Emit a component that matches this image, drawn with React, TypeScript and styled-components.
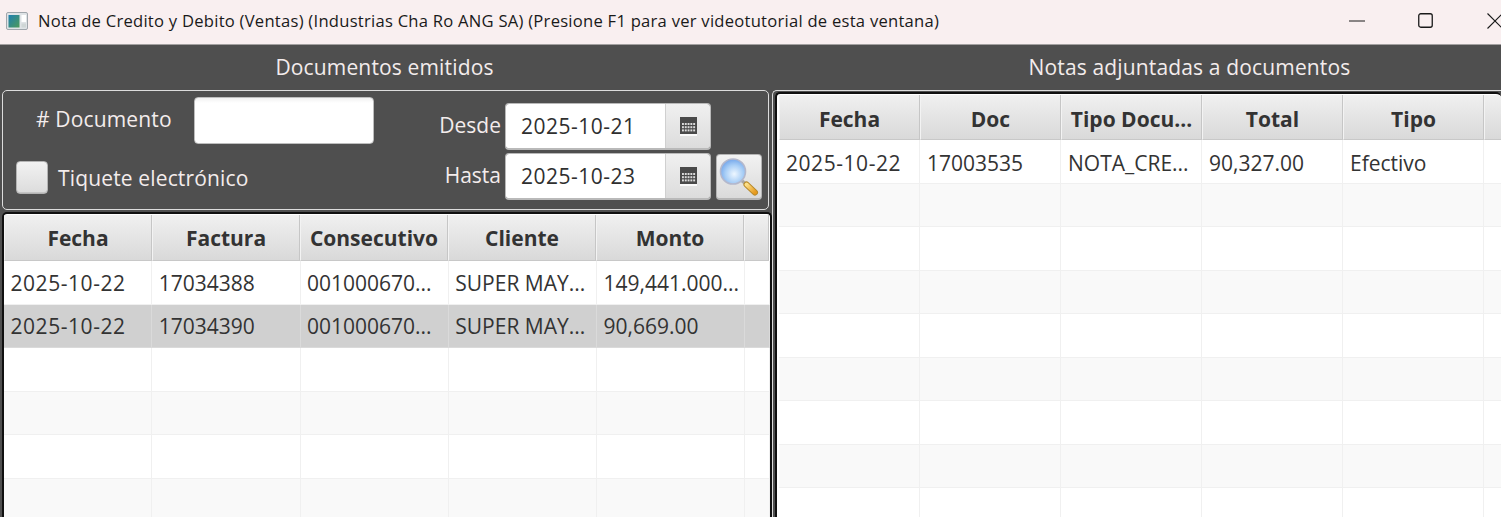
import React from "react";
import styled, { createGlobalStyle } from "styled-components";

const Global = createGlobalStyle`
  html, body { margin: 0; padding: 0; width: 1501px; height: 517px; overflow: hidden; background: #4f4f4f; }
  * { box-sizing: border-box; }
  #root { width: 1501px; height: 517px; }
`;

const FONT = `"Open Sans", "Noto Sans", "Liberation Sans", sans-serif`;

const Win = styled.div`
  width: 1501px; height: 517px; overflow: hidden; display: flex; flex-direction: column;
  background: #4f4f4f; font-family: ${FONT};
`;
const TitleBar = styled.header`
  height: 45px; flex: none; display: flex; align-items: center; padding-left: 6px; padding-bottom: 3px;
  background: #f9eff0; border-bottom: 1px solid #a3a0a0; overflow: hidden;
`;
const AppIcon = styled.svg`width: 23px; height: 20px; flex: none; margin-right: 9px;`;
const TitleText = styled.div`
  flex: 1; min-width: 0; white-space: nowrap; font-size: 16.6px; color: #1a1a1a; letter-spacing: 0.25px;
`;
const Controls = styled.div`display: flex; flex: none; margin-right: -28px;`;
const Control = styled.div`width: 69px; height: 30px; display: flex; align-items: center; justify-content: center;`;

const Columns = styled.main`flex: 1; min-height: 0; display: flex;`;
const LeftCol = styled.section`
  width: 772px; flex: none; display: flex; flex-direction: column; padding-left: 2px;
`;
const RightCol = styled.section`flex: 1; min-width: 0; display: flex; flex-direction: column;`;
const Heading = styled.h2<{ $left?: number; $right?: number }>`
  margin: 0; height: 45px; flex: none; display: flex; align-items: center; justify-content: center;
  padding-left: ${p => p.$left ?? 0}px; padding-right: ${p => p.$right ?? 0}px; padding-bottom: 1px;
  font-size: 21px; font-weight: 400; color: #f3ecec; letter-spacing: 0.15px; white-space: nowrap;
`;

const Filter = styled.div`
  width: 767px; height: 120px; flex: none; margin-bottom: 2px;
  border: 1.5px solid #dcdcdc; border-radius: 5px; padding: 5.5px 6px 7px 13px;
  display: flex; justify-content: space-between;
`;
const FilterLeft = styled.div`width: 360px; display: flex; flex-direction: column; justify-content: space-between;`;
const DocRow = styled.div`display: flex; align-items: center; padding-left: 20px;`;
const Label = styled.label`font-size: 21px; color: #f3ecec; letter-spacing: 0.15px;`;
const DocLabel = styled(Label)`width: 158px; flex: none; padding-bottom: 3px;`;
const TextBox = styled.div`
  width: 180px; height: 47px; border-radius: 4px; background: linear-gradient(#f1f1f1 0, #fff 5px);
  border: 1px solid #bdbdbd;
`;
const CheckRow = styled.div`display: flex; align-items: center; gap: 10px; padding-bottom: 8px;`;
const CheckBox = styled.div`
  width: 32px; height: 33px; border-radius: 4px; border: 1px solid #b4b4b4;
  background: linear-gradient(#f2f2f2, #dcdcdc); box-shadow: inset 0 -1px 0 #c4c4c4;
`;
const FilterRight = styled.div`display: flex; align-items: flex-end; gap: 5px;`;
const DateRows = styled.div`display: flex; flex-direction: column; gap: 3px; padding-bottom: 2px;`;
const DateRow = styled.div`display: flex; align-items: center; gap: 4px; justify-content: flex-end;`;
const DateLabel = styled.label`font-size: 21px; color: #f3ecec; padding-bottom: 3px;`;
const DateField = styled.div`
  width: 206px; height: 47px; display: flex; border-radius: 4px; overflow: hidden;
  border: 1px solid #b9b9b9; border-bottom-width: 2px;
`;
const DateValue = styled.div`
  width: 160px; flex: none; background: #fff; padding-left: 15px; display: flex; align-items: center;
  font-size: 21px; color: #2f2f2f; letter-spacing: 0.5px; border-right: 1px solid #d0d0d0;
`;
const DateButton = styled.div`
  flex: 1; display: flex; align-items: center; justify-content: center;
  background: linear-gradient(#f0f0f0, #dcdcdc);
`;
const SearchButton = styled.div`
  width: 46px; height: 46px; margin-bottom: 2px; border-radius: 4px; border: 1px solid #b4b4b4; border-bottom-width: 2px;
  background: linear-gradient(#f2f2f2, #dadada); display: flex; align-items: center; justify-content: center;
`;

const TableFrame = styled.div`
  flex: 1; min-height: 0; overflow: hidden; background: #fff;
  border: 2px solid #101010; border-bottom: none; border-radius: 5px 5px 0 0; padding: 1px 0 0 0;
`;
const RightOuter = styled.div`
  flex: 1; min-height: 0; overflow: hidden;
  border: 1.5px solid #dcdcdc; border-bottom: none; border-right: none; border-radius: 5px 0 0 0; padding: 1px 0 0 2px;
`;
const RightFrame = styled(TableFrame)`border-right: none; height: 100%; padding: 1px 0 0 2px;`;

const Row = styled.div<{ $w: number; $tail: string; $h?: number }>`
  display: grid; grid-template-columns: repeat(5, ${p => p.$w}px) ${p => p.$tail};
  height: ${p => p.$h ?? 43.5}px;
`;
const HeadCell = styled.div<{ $top: number }>`
  display: flex; align-items: center; justify-content: center; overflow: hidden; white-space: nowrap;
  font-size: 21px; font-weight: 700; color: #333; padding-top: ${p => p.$top}px;
  background: linear-gradient(#f0f0f0, #d9d9d9);
  border-right: 1.5px solid #c6c6c6; border-left: 1px solid #f3f3f3; border-bottom: 1.5px solid #c8c8c8;
`;
const BodyRow = styled(Row)<{ $tone: "white" | "alt" | "sel" }>`
  background: ${p => (p.$tone === "white" ? "#fff" : p.$tone === "alt" ? "#f9f9f9" : "#d0d0d0")};
`;
const Cell = styled.div<{ $tone: "white" | "alt" | "sel"; $pad: number; $top: number; $date: boolean }>`
  display: flex; align-items: center; padding: ${p => p.$top}px 4px 0 ${p => p.$pad}px; overflow: hidden; white-space: nowrap;
  font-size: 21px; color: #333; letter-spacing: ${p => (p.$date ? "0.55px" : "0")};
  border-right: 1.5px solid ${p => (p.$tone === "sel" ? "#dadada" : "#f0f0f0")};
  border-bottom: 1.5px solid ${p => (p.$tone === "sel" ? "#dadada" : "#f0f0f0")};
`;

const Calendar = () => (
  <svg width="17" height="19" viewBox="0 0 17 19">
    <rect width="17" height="17" fill="#4a4a4a" />
    <rect y="17" width="17" height="2" fill="#fafafa" />
    {[0, 1, 2].map(r => [0, 1, 2, 3, 4].map(c => (
      <rect key={`${r}${c}`} x={2 + c * 2.8} y={6 + r * 3.2} width="1.9" height="2" fill="#dcdcdc" />
    )))}
  </svg>
);

const Lens = () => (
  <svg width="42" height="42" viewBox="0 0 42 42">
    <defs>
      <radialGradient id="glass" cx="0.55" cy="0.6" r="0.65">
        <stop offset="0" stopColor="#eef7ff" />
        <stop offset="0.55" stopColor="#a8cef6" />
        <stop offset="1" stopColor="#6a9fe8" />
      </radialGradient>
      <linearGradient id="handle" x1="0" y1="0" x2="1" y2="1">
        <stop offset="0" stopColor="#fce08a" />
        <stop offset="1" stopColor="#e79a1e" />
      </linearGradient>
    </defs>
    <line x1="23" y1="24" x2="29" y2="29" stroke="#a8a8a8" strokeWidth="3" />
    <line x1="28.5" y1="28.5" x2="37" y2="36.5" stroke="#b98a2a" strokeWidth="6" strokeLinecap="round" />
    <line x1="28.5" y1="28.5" x2="37" y2="36.5" stroke="url(#handle)" strokeWidth="4" strokeLinecap="round" />
    <circle cx="15" cy="15.5" r="12.5" fill="url(#glass)" stroke="#b4b8cc" strokeWidth="1.6" />
  </svg>
);

type Tone = "white" | "alt" | "sel";

const Table = ({ headW, w, tail, headH, pad, top, heads, rows, tones }: {
  headW: number; w: number; tail: string; headH: number; pad: number; top: number;
  heads: string[]; rows: string[][]; tones: Tone[];
}) => (
  <>
    <Row $w={headW} $tail={tail} $h={headH}>
      {heads.map((h, i) => <HeadCell key={i} $top={top}>{h}</HeadCell>)}
      <HeadCell $top={top} />
    </Row>
    {tones.map((t, r) => (
      <BodyRow key={r} $w={w} $tail={tail} $tone={t}>
        {[0, 1, 2, 3, 4, 5].map(c => {
          const text = rows[r]?.[c] ?? "";
          return <Cell key={c} $tone={t} $pad={pad} $top={top} $date={/^\d{4}-/.test(text)}>{text}</Cell>;
        })}
      </BodyRow>
    ))}
  </>
);

export default function App() {
  return (
    <Win>
      <Global />
      <TitleBar>
        <AppIcon viewBox="0 0 23 20">
          <defs>
            <linearGradient id="ic" x1="0" y1="0" x2="1" y2="1">
              <stop offset="0" stopColor="#1f7fb0" />
              <stop offset="1" stopColor="#4d9a5a" />
            </linearGradient>
          </defs>
          <rect x="0.5" y="1.5" width="21" height="17" rx="1.5" fill="#dfe3e6" stroke="#a0a6ac" />
          <rect x="2.5" y="4" width="11" height="12.5" fill="url(#ic)" />
          <rect x="15.5" y="4" width="4.5" height="7" fill="#fff" />
          <rect x="15.5" y="12.5" width="4.5" height="4" fill="#cfd6d6" />
        </AppIcon>
        <TitleText>Nota de Credito y Debito (Ventas) (Industrias Cha Ro ANG SA) (Presione F1 para ver videotutorial de esta ventana)</TitleText>
        <Controls>
          <Control>
            <svg width="16" height="2" viewBox="0 0 16 2"><line x1="0" y1="1" x2="16" y2="1" stroke="#1a1a1a" strokeWidth="1" /></svg>
          </Control>
          <Control>
            <svg width="15" height="15" viewBox="0 0 15 15"><rect x="0.75" y="0.75" width="13.5" height="13.5" rx="2" fill="none" stroke="#1a1a1a" strokeWidth="1.3" /></svg>
          </Control>
          <Control>
            <svg width="16" height="16" viewBox="0 0 16 16"><path d="M0.5 0.5L15.5 15.5M15.5 0.5L0.5 15.5" stroke="#1a1a1a" strokeWidth="1.1" fill="none" /></svg>
          </Control>
        </Controls>
      </TitleBar>
      <Columns>
        <LeftCol>
          <Heading $right={5}>Documentos emitidos</Heading>
          <Filter>
            <FilterLeft>
              <DocRow>
                <DocLabel># Documento</DocLabel>
                <TextBox />
              </DocRow>
              <CheckRow>
                <CheckBox />
                <Label>Tiquete electrónico</Label>
              </CheckRow>
            </FilterLeft>
            <FilterRight>
              <DateRows>
                <DateRow>
                  <DateLabel>Desde</DateLabel>
                  <DateField>
                    <DateValue>2025-10-21</DateValue>
                    <DateButton><Calendar /></DateButton>
                  </DateField>
                </DateRow>
                <DateRow>
                  <DateLabel>Hasta</DateLabel>
                  <DateField>
                    <DateValue>2025-10-23</DateValue>
                    <DateButton><Calendar /></DateButton>
                  </DateField>
                </DateRow>
              </DateRows>
              <SearchButton><Lens /></SearchButton>
            </FilterRight>
          </Filter>
          <TableFrame>
            <Table
              headW={148}
              w={148.25}
              tail="25px"
              headH={46}
              pad={6.5}
              top={1}
              heads={["Fecha", "Factura", "Consecutivo", "Cliente", "Monto"]}
              rows={[
                ["2025-10-22", "17034388", "001000670...", "SUPER MAY...", "149,441.000..."],
                ["2025-10-22", "17034390", "001000670...", "SUPER MAY...", "90,669.00"],
              ]}
              tones={["white", "sel", "white", "alt", "white", "alt"]}
            />
          </TableFrame>
        </LeftCol>
        <RightCol>
          <Heading $left={106}>Notas adjuntadas a documentos</Heading>
          <RightOuter>
            <RightFrame>
              <Table
                headW={141}
                w={141}
                tail="40px"
                headH={45}
                pad={7}
                top={3}
                heads={["Fecha", "Doc", "Tipo Docu...", "Total", "Tipo"]}
                rows={[["2025-10-22", "17003535", "NOTA_CRE...", "90,327.00", "Efectivo"]]}
                tones={["white", "alt", "white", "alt", "white", "alt", "white", "alt", "white"]}
              />
            </RightFrame>
          </RightOuter>
        </RightCol>
      </Columns>
    </Win>
  );
}
